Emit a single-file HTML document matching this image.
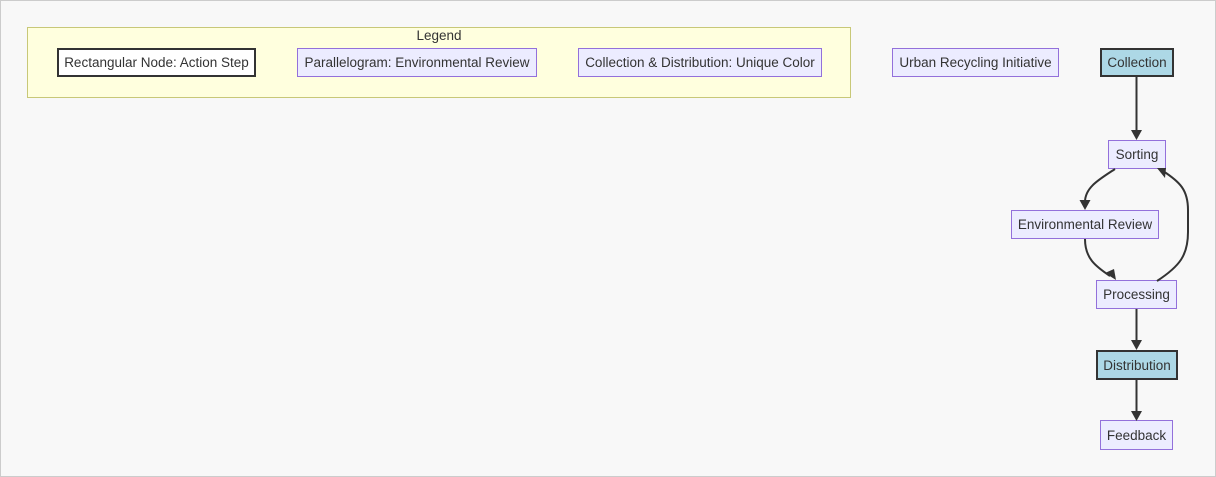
<!DOCTYPE html>
<html><head><meta charset="utf-8"><style>
html,body{margin:0;padding:0}
body{width:1216px;height:477px;background:#f8f8f8;position:relative;overflow:hidden;font-family:"Liberation Sans",sans-serif;color:#333}
.frame{position:absolute;left:0;top:0;width:1214px;height:475px;border:1px solid #ccc}
.n{position:absolute;box-sizing:border-box;display:flex;align-items:center;justify-content:center;font-size:13.5px;white-space:nowrap;background:#ececff;border:1px solid #9370db}
.b{background:#fff;border:2px solid #333}
.l{background:#add8e6;border:2px solid #333}
.leg{position:absolute;left:27px;top:27px;width:824px;height:71px;box-sizing:border-box;background:#ffffde;border:1px solid #c8c878}
.lt{position:absolute;left:0;width:878px;top:28px;text-align:center;font-size:13.5px}
svg{position:absolute;left:0;top:0}
</style></head><body>
<div class="frame"></div>
<div class="leg"></div>
<div class="lt">Legend</div>
<div class="n b" style="left:57px;top:48px;width:199px;height:29px">Rectangular Node: Action Step</div>
<div class="n" style="left:297px;top:48px;width:240px;height:29px">Parallelogram: Environmental Review</div>
<div class="n" style="left:578px;top:48px;width:244px;height:29px">Collection &amp; Distribution: Unique Color</div>
<div class="n" style="left:892px;top:48px;width:167px;height:29px">Urban Recycling Initiative</div>
<div class="n l" style="left:1100px;top:48px;width:74px;height:29px">Collection</div>
<div class="n" style="left:1108px;top:140px;width:58px;height:29px">Sorting</div>
<div class="n" style="left:1011px;top:210px;width:148px;height:29px">Environmental Review</div>
<div class="n" style="left:1096px;top:280px;width:81px;height:29px">Processing</div>
<div class="n l" style="left:1096px;top:350px;width:82px;height:30px">Distribution</div>
<div class="n" style="left:1100px;top:420px;width:73px;height:30px">Feedback</div>
<svg width="1216" height="477" fill="none" stroke="#333" stroke-width="2">
<path d="M1136.5 77V132"/>
<path d="M1115 169C1100 179 1085 187 1085 202"/>
<path d="M1085 239C1085 258 1095 266 1110 276"/>
<path d="M1157 281C1180 266 1188 255 1188 232V210C1188 190 1180 182 1163 171"/>
<path d="M1136.5 309V342"/>
<path d="M1136.5 380V412"/>
<g fill="#333" stroke="none">
<path d="M1131 130h11l-5.5 10z"/>
<path d="M1079.5 200h11l-5.5 10z"/>
<path d="M1105 273l9-4 2 11z"/>
<path d="M1157 168l9 0-1 10z"/>
<path d="M1131 340h11l-5.5 10z"/>
<path d="M1131 411h11l-5.5 10z"/>
</g>
</svg>
</body></html>
